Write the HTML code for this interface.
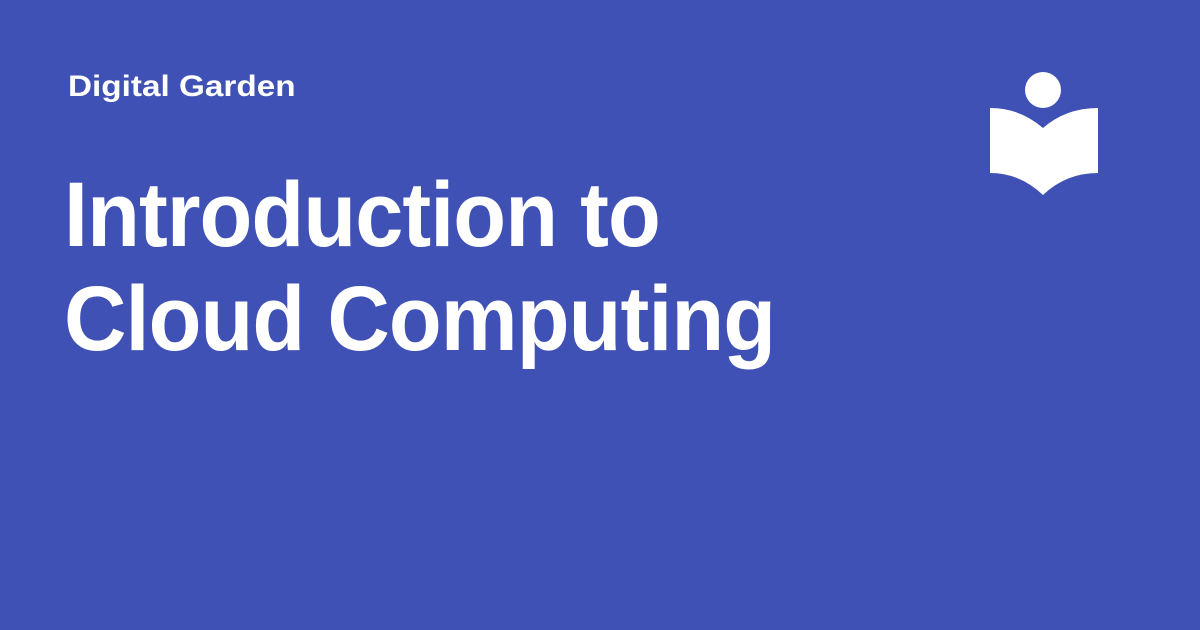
<!DOCTYPE html>
<html><head><style>
html,body{margin:0;padding:0}
body{width:1200px;height:630px;background:#3f51b5;position:relative;overflow:hidden;font-family:"Liberation Sans",sans-serif;color:#fff}
.s{position:absolute;left:68px;top:70px;font-size:30px;font-weight:bold;transform:scaleX(1.11);transform-origin:0 0}
.t{position:absolute;left:64px;top:163px;font-size:92px;font-weight:bold;line-height:104px;letter-spacing:-1px;transform:scaleX(0.94);transform-origin:0 0;white-space:nowrap}
svg{position:absolute;left:0;top:0}
</style></head><body>
<div class="s">Digital Garden</div>
<div class="t">Introduction to<br>Cloud Computing</div>
<svg width="1200" height="630"><circle cx="1043" cy="90" r="18" fill="#fff"/>
<path d="M990 108 Q1020 108 1043 128 Q1066 108 1098 108 L1098 173 Q1066 173 1043 195 Q1020 173 990 173 Z" fill="#fff"/></svg>
</body></html>
